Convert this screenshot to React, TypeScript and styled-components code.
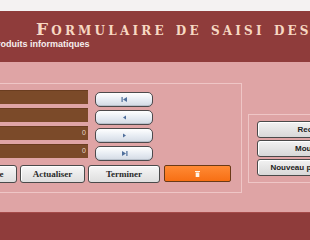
import React from 'react';
import styled, { createGlobalStyle } from 'styled-components';

const GlobalStyle = createGlobalStyle`
  html, body {
    margin: 0;
    padding: 0;
    background: #f5f3f3;
    overflow: hidden;
  }
`;

const Page = styled.div`
  width: 310px;
  height: 240px;
  overflow: hidden;
  display: flex;
  flex-direction: column;
  background: #f5f3f3;
`;

const TopStrip = styled.div`
  height: 11px;
  flex: none;
  background: #f4f2f2;
`;

const Banner = styled.header`
  height: 51px;
  flex: none;
  background: #8f3c3b;
  display: flex;
  flex-direction: column;
  overflow: hidden;
`;

const Title = styled.h1`
  margin: 9px 0 0 36px;
  font-family: 'DejaVu Serif', serif;
  font-variant: small-caps;
  font-weight: bold;
  font-size: 17px;
  line-height: 19px;
  letter-spacing: 3.2px;
  color: #f7d8c2;
  white-space: nowrap;
`;

const Subtitle = styled.div`
  margin: 0 0 0 -9px;
  font-family: 'Liberation Sans', Arial, sans-serif;
  font-weight: bold;
  font-size: 9px;
  line-height: 10px;
  color: #f6eeee;
  white-space: nowrap;
`;

const Body = styled.main`
  height: 150px;
  flex: none;
  background: #dfa4a5;
  display: flex;
  align-items: flex-start;
`;

const Footer = styled.footer`
  flex: 1;
  background: #8f3c3b;
  border-top: 1px solid #a54a49;
`;

const Panel = styled.section`
  box-sizing: border-box;
  border: 1px solid #efc6c6;
`;

const LeftPanel = styled(Panel)`
  flex: none;
  margin: 21px 0 0 -60px;
  width: 302px;
  height: 110px;
  padding-top: 6px;
`;

const RightPanel = styled(Panel)`
  flex: none;
  margin: 52px 0 0 6px;
  width: 130px;
  height: 69px;
  padding: 6px 0 0 8px;
  display: flex;
  flex-direction: column;
  gap: 2px;
`;

const Rows = styled.div`
  display: grid;
  grid-template-columns: 147px 58px;
  grid-auto-rows: 18px;
  column-gap: 7px;
`;

const Field = styled.div`
  height: 14px;
  align-self: start;
  background: #7b4a29;
  box-shadow: inset 0 1px 0 #6a3d20;
  font-family: 'Liberation Sans', Arial, sans-serif;
  font-size: 7px;
  line-height: 14px;
  color: #e9d8c8;
  text-align: right;
  padding-right: 2px;
`;

const NavButton = styled.button`
  align-self: center;
  height: 15px;
  padding: 0;
  border: 1px solid #4d4a4c;
  border-radius: 5px;
  background: linear-gradient(#ffffff, #e6ebf2 55%, #d3dae4);
  box-shadow: inset 0 -1px 0 #b9c1cc;
  display: flex;
  align-items: center;
  justify-content: center;
`;

const ButtonRow = styled.div`
  display: flex;
  gap: 3px;
  margin: 3px 0 0 11px;
`;

const ActionButton = styled.button<{ $w: number }>`
  width: ${(p) => p.$w}px;
  height: 18px;
  flex: none;
  padding: 0;
  border: 1px solid #4a4a4a;
  border-radius: 3px;
  background: linear-gradient(#f7f7f7, #dedede);
  box-shadow: inset 1px 1px 0 #ffffff;
  font-family: 'Liberation Serif', 'Times New Roman', serif;
  font-weight: bold;
  font-size: 9px;
  color: #2a2a2a;
  white-space: nowrap;
  overflow: hidden;
`;

const OrangeButton = styled.button`
  width: 67px;
  height: 17px;
  flex: none;
  margin-left: 1px;
  padding: 0;
  border: 1px solid #6a3a18;
  border-radius: 2px;
  background: linear-gradient(#ff8a35, #f76f14);
  display: flex;
  align-items: center;
  justify-content: center;
`;

const SideButton = styled.button`
  width: 125px;
  height: 17px;
  flex: none;
  padding: 0;
  border: 1px solid #4a4a4a;
  border-radius: 3px;
  background: linear-gradient(#f2f2f2, #d8d8d8);
  box-shadow: inset 1px 1px 0 #ffffff;
  font-family: 'Liberation Sans', Arial, sans-serif;
  font-weight: bold;
  font-size: 8px;
  color: #222;
  white-space: nowrap;
`;

type NavKind = 'first' | 'prev' | 'next' | 'last';

const NavIcon = ({ kind }: { kind: NavKind }) => {
  const c = '#4f6f9c';
  return (
    <svg width="7" height="5" viewBox="0 0 7 5">
      {kind === 'first' && (
        <>
          <rect x="0.5" y="0" width="1.2" height="5" fill={c} />
          <polygon points="6,0 2,2.5 6,5" fill={c} />
        </>
      )}
      {kind === 'prev' && <polygon points="5,0.5 2,2.5 5,4.5" fill={c} />}
      {kind === 'next' && <polygon points="2,0.5 5,2.5 2,4.5" fill={c} />}
      {kind === 'last' && (
        <>
          <polygon points="1,0 5,2.5 1,5" fill={c} />
          <rect x="5.3" y="0" width="1.2" height="5" fill={c} />
        </>
      )}
    </svg>
  );
};

const TrashIcon = () => (
  <svg width="5" height="6" viewBox="0 0 5 6">
    <rect x="0" y="0" width="5" height="1" fill="#fff4e8" />
    <rect x="0.7" y="1.5" width="3.6" height="4.5" fill="#fff4e8" />
  </svg>
);

const rows: { value: string; nav: NavKind }[] = [
  { value: '', nav: 'first' },
  { value: '', nav: 'prev' },
  { value: '0', nav: 'next' },
  { value: '0', nav: 'last' },
];

export default function App() {
  return (
    <>
      <GlobalStyle />
      <Page>
        <TopStrip />
        <Banner>
          <Title>Formulaire de saisi des produits</Title>
          <Subtitle>Produits informatiques</Subtitle>
        </Banner>
        <Body>
          <LeftPanel>
            <Rows>
              {rows.map((r) => (
                <React.Fragment key={r.nav}>
                  <Field>{r.value}</Field>
                  <NavButton>
                    <NavIcon kind={r.nav} />
                  </NavButton>
                </React.Fragment>
              ))}
            </Rows>
            <ButtonRow>
              <ActionButton $w={65}>Supprime</ActionButton>
              <ActionButton $w={65}>Actualiser</ActionButton>
              <ActionButton $w={72}>Terminer</ActionButton>
              <OrangeButton>
                <TrashIcon />
              </OrangeButton>
            </ButtonRow>
          </LeftPanel>
          <RightPanel>
            <SideButton>Rechercher</SideButton>
            <SideButton>Mouvements</SideButton>
            <SideButton>Nouveau produit en stock</SideButton>
          </RightPanel>
        </Body>
        <Footer />
      </Page>
    </>
  );
}
